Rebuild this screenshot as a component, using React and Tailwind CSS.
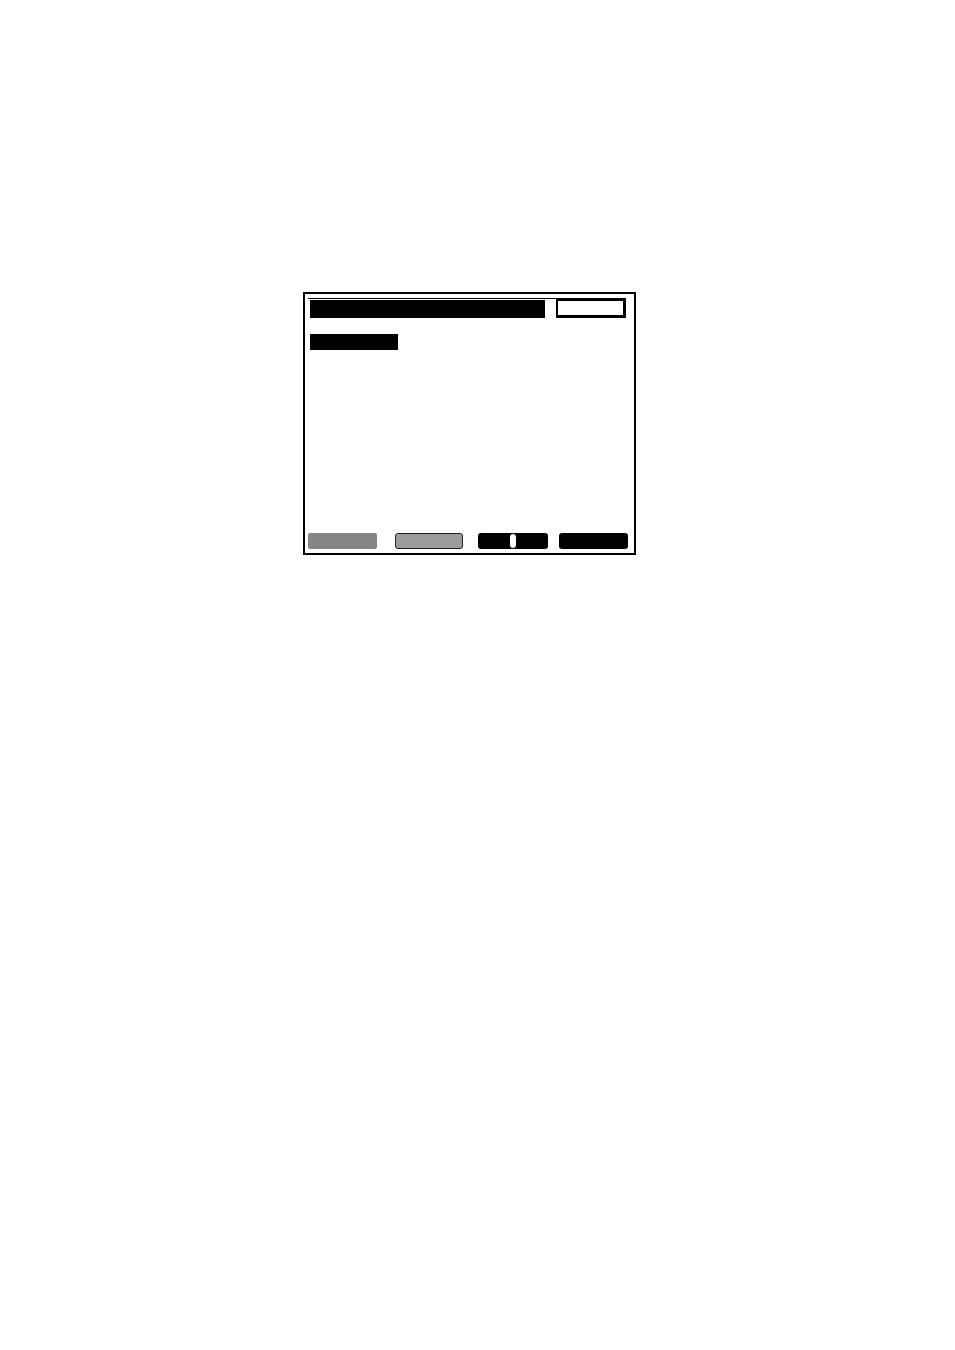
import React from "react";

const SoftKey = ({ className, children }) => (
  <div className={`h-[16px] flex items-center justify-center shrink-0 ${className}`}>
    {children}
  </div>
);

const App = () => {
  return (
    <div className="min-h-[1350px] w-full bg-white pt-[292px] pl-[303px]" style={{ fontFamily: '"Liberation Sans", Arial, sans-serif' }}>
      <div className="w-[333px] h-[263px] border-2 border-black flex flex-col">
        {/* title strip */}
        <div className="mt-[4px] ml-[3px] w-[318px] border-t border-black">
          <div className="flex items-start">
            <div className="mt-[1px] ml-[2px] w-[236px] h-[18px] bg-black" />
            <div className="ml-[11px] w-[70px] h-[19px] border-2 border-black border-r-[3px] border-b-[3px] bg-white shrink-0" />
          </div>
        </div>

        {/* selected line */}
        <div className="mt-[16px] ml-[5px] w-[88px] h-[16px] bg-black" />

        {/* soft keys */}
        <div className="mt-auto mb-[4px] flex items-center pl-[3px]">
          <SoftKey className="w-[69px] bg-[#858585] rounded-[2px]" />
          <SoftKey className="ml-[18px] w-[68px] bg-[#9c9c9c] border border-[#222] rounded-[3px]" />
          <SoftKey className="ml-[15px] w-[70px] bg-black rounded-[3px]">
            <div className="w-[8px] h-[16px] bg-white rounded-full border border-black" />
          </SoftKey>
          <SoftKey className="ml-[11px] w-[69px] bg-black rounded-[3px]" />
        </div>
      </div>
    </div>
  );
};

export default App;
